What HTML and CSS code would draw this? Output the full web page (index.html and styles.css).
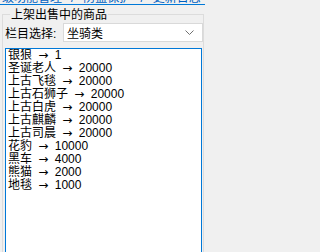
FILE: index.html
```html
<!DOCTYPE html>
<html lang="zh">
<head>
<meta charset="utf-8">
<link rel="stylesheet" href="styles.css">
</head>
<body>
<div class="tabs">
  <div class="tabs-text"><span class="tab">级功能管理</span><span class="sep">/</span><span class="tab">防盗保护</span><span class="sep">/</span><span class="tab">更新日志</span></div>
</div>
<div class="group">
  <div class="legend">上架出售中的商品</div>
  <div class="row">
    <span class="label">栏目选择:</span>
    <div class="combo">
      <span class="combo-text">坐骑类</span>
      <svg class="chev" width="9" height="5" viewBox="0 0 9 5"><path d="M0.5 0.5 L4.5 4.5 L8.5 0.5" fill="none" stroke="#707070" stroke-width="1"/></svg>
    </div>
  </div>
  <div class="list">
    <div class="item">银狼 <span class="arr">→</span> 1</div>
    <div class="item">圣诞老人 <span class="arr">→</span> 20000</div>
    <div class="item">上古飞毯 <span class="arr">→</span> 20000</div>
    <div class="item">上古石狮子 <span class="arr">→</span> 20000</div>
    <div class="item">上古白虎 <span class="arr">→</span> 20000</div>
    <div class="item">上古麒麟 <span class="arr">→</span> 20000</div>
    <div class="item">上古司晨 <span class="arr">→</span> 20000</div>
    <div class="item">花豹 <span class="arr">→</span> 10000</div>
    <div class="item">黑车 <span class="arr">→</span> 4000</div>
    <div class="item">熊猫 <span class="arr">→</span> 2000</div>
    <div class="item">地毯 <span class="arr">→</span> 1000</div>
  </div>
</div>
</body>
</html>
```
FILE: styles.css
```css
html, body {
  margin: 0;
  padding: 0;
  background: #f0f0f0;
  width: 205px;
  height: 252px;
  overflow: hidden;
  font-family: "Liberation Sans", "Noto Sans CJK SC", sans-serif;
  font-size: 12px;
  color: #000;
}
body {
  display: flex;
  flex-direction: column;
}
.tabs {
  height: 4px;
  flex: none;
  overflow: hidden;
  border-bottom: 1px solid #0078d7;
}
.tabs-text {
  margin-top: -8px;
  white-space: nowrap;
  color: #0060c0;
  line-height: 13px;
  display: flex;
}
.tab { padding: 0 2px; }
.sep { padding: 0 7px; }
.group {
  flex: 1;
  min-height: 0;
  margin: 9px 1px 0 2px;
  border: 1px solid #dcdcdc;
  border-bottom: none;
  position: relative;
  padding: 0 0 0 1px;
  display: flex;
  flex-direction: column;
}
.legend {
  position: absolute;
  top: -6px;
  left: 7px;
  background: #f0f0f0;
  padding: 0 1px;
  line-height: 12px;
}
.row {
  display: flex;
  align-items: center;
  margin-top: 8px;
  height: 19px;
  flex: none;
}
.label {
  width: 58px;
  padding-left: 1px;
}
.combo {
  flex: 1;
  height: 17px;
  background: #fff;
  border: 1px solid #d9d9d9;
  display: flex;
  align-items: center;
  justify-content: space-between;
  padding: 0 8px 0 3px;
}
.list {
  flex: 1;
  min-height: 0;
  overflow: hidden;
  margin: 6px 1px 0 1px;
  background: #fff;
  border: 1px solid #0078d7;
  border-bottom: none;
  padding: 0 2px;
}
.item {
  line-height: 13px;
  height: 13px;
  white-space: nowrap;
}
.arr {
  font-family: "DejaVu Sans", sans-serif;
  font-size: 12px;
  margin: 0 3px;
}
```
